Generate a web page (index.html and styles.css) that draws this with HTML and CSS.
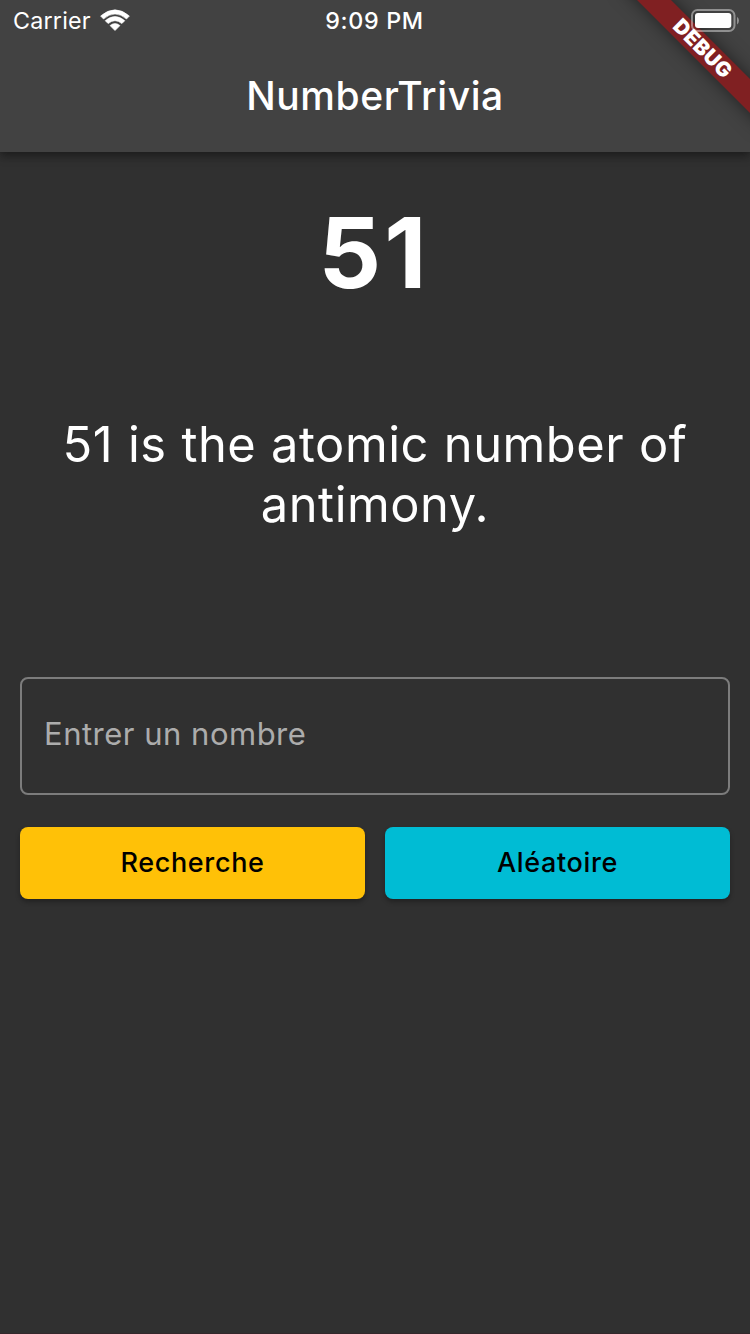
FILE: index.html
```html
<!DOCTYPE html>
<html lang="fr">
<head>
<meta charset="utf-8">
<title>NumberTrivia</title>
<link rel="stylesheet" href="styles.css">
</head>
<body>
<div class="screen">
  <header class="app-bar">
    <div class="status-bar">
      <div class="carrier">
        <span class="carrier-name">Carrier</span>
        <svg class="wifi" width="30" height="22" viewBox="0 0 30 22">
          <path d="M.6 7 Q15-5.4 29.4 7L26.5 10Q15 0 3.5 10Z M5.2 11.7Q15 3.3 24.8 11.7L21.9 14.6Q15 8.8 8.1 14.6Z M10 16.6Q15 12.5 20 16.6L15 21.6Z" fill="#fff" stroke="#fff" stroke-width=".6" stroke-linejoin="round"/>
        </svg>
      </div>
      <span class="clock">9:09 PM</span>
      <svg class="battery" width="50" height="24" viewBox="0 0 50 24">
        <rect x="1" y="1" width="42.5" height="21" rx="5.5" fill="none" stroke="#fff" stroke-opacity=".42" stroke-width="2"/>
        <rect x="4" y="4" width="36.3" height="15" rx="3" fill="#fff"/>
        <path d="M46 7.7Q48 9 48 11.6T46 15.5Z" fill="#fff" fill-opacity=".42"/>
      </svg>
    </div>
    <h1 class="title">NumberTrivia</h1>
  </header>
  <main class="content">
    <div class="number">51</div>
    <p class="trivia">51 is the atomic number of antimony.</p>
    <div class="field"><span class="hint">Entrer un nombre</span></div>
    <div class="actions">
      <div class="button search"><span>Recherche</span></div>
      <div class="button random"><span>Aléatoire</span></div>
    </div>
  </main>
  <div class="debug-banner"><span>DEBUG</span></div>
</div>
</body>
</html>
```

FILE: styles.css
```css
* { box-sizing: border-box; }
body { margin: 0; background: #303030; }
.screen {
  position: relative;
  width: 750px;
  height: 1334px;
  overflow: hidden;
  background: #303030;
  border-bottom: 1px solid #33272b;
  color: #fff;
  font-family: Inter, "Liberation Sans", sans-serif;
}
.app-bar {
  height: 152px;
  background: #424242;
  box-shadow: 0 4px 10px rgba(0, 0, 0, .3), 0 2px 8px rgba(0, 0, 0, .2);
}
.status-bar {
  position: relative;
  z-index: 2;
  display: grid;
  grid-template-columns: 1fr auto 1fr;
  align-items: center;
  height: 41px;
  padding: 1px 9px 0 13px;
}
.carrier { display: flex; align-items: center; gap: 9px; }
.carrier-name { font-size: 23.3px; letter-spacing: .2px; line-height: 40px; }
.wifi { display: block; margin-bottom: 2px; }
.clock { padding-right: 5px; font-size: 23.3px; font-weight: 500; letter-spacing: .65px; line-height: 40px; }
.battery { justify-self: end; display: block; }
.title {
  margin: -1px 0 0;
  text-align: center;
  font-size: 39px;
  font-weight: 500;
  line-height: 112px;
  letter-spacing: .6px;
}
.content { display: flex; flex-direction: column; padding: 0 20px; }
.number {
  padding: 41px 2px 0 0;
  text-align: center;
  font-size: 98px;
  font-weight: 700;
  line-height: 120px;
  letter-spacing: 3px;
}
.trivia {
  height: 262px;
  margin: 102px 0 0;
  text-align: center;
  font-size: 48.8px;
  line-height: 60px;
  letter-spacing: .55px;
  word-spacing: .5px;
}
.field {
  display: flex;
  align-items: center;
  height: 118px;
  padding: 0 22px 4px;
  border: 2px solid #7c7c7c;
  border-radius: 8px;
}
.hint { color: #acacac; font-size: 31px; line-height: 40px; letter-spacing: .5px; }
.actions { display: grid; grid-template-columns: 1fr 1fr; gap: 20px; margin-top: 32px; }
.button {
  display: flex;
  justify-content: center;
  align-items: center;
  height: 72px;
  padding-bottom: 2px;
  border-radius: 8px;
  box-shadow: 0 3px 5px rgba(0, 0, 0, .3);
  color: #000;
  font-size: 27px;
  font-weight: 450;
  letter-spacing: .65px;
}
.search { background: #ffc107; }
.random { background: #00bcd4; }
.debug-banner {
  position: absolute;
  z-index: 1;
  left: 602px;
  top: 36px;
  width: 200px;
  height: 24px;
  transform: rotate(45deg);
  background: #802022;
  box-shadow: 0 0 18px rgba(0, 0, 0, .5);
  padding-left: 2px;
  text-align: center;
  font-size: 20.6px;
  font-weight: 900;
  line-height: 24px;
  letter-spacing: .4px;
}
```
